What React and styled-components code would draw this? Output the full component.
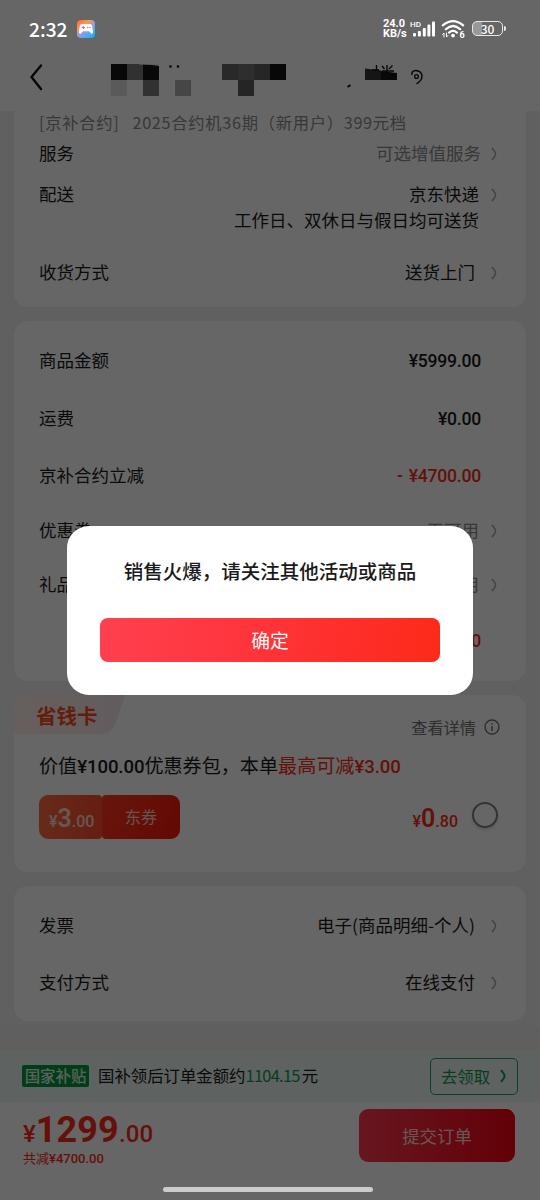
import React from 'react';
import styled, { createGlobalStyle } from 'styled-components';

const GlobalStyle = createGlobalStyle`
  * {
    box-sizing: border-box;
  }
  body {
    margin: 0;
    background: #f0f0f0;
    font-family: 'Noto Sans CJK SC', sans-serif;
    color: #1a1a1a;
  }
`;

const Page = styled.div`
  position: relative;
  display: flex;
  flex-direction: column;
  width: 540px;
  height: 1200px;
  overflow: hidden;
  background: linear-gradient(to bottom, #f0f0f0 1020px, #f2eaea 1046px);
`;

const StatusBar = styled.div`
  position: relative;
  z-index: 3;
  display: flex;
  align-items: center;
  height: 57px;
  padding: 0 34px 0 29px;
  color: #fff;
`;

const Clock = styled.span`
  width: 48px;
  font-size: 19.2px;
  font-weight: 500;
  line-height: 24px;
  white-space: nowrap;
`;

const StatusRight = styled.div`
  display: flex;
  align-items: center;
  margin-left: auto;

  > * {
    flex-shrink: 0;
  }
`;

const Speed = styled.div`
  width: 27px;
  font-family: Roboto, sans-serif;
  font-size: 11px;
  font-weight: 700;
  line-height: 10px;
  white-space: nowrap;
`;

const Battery = styled.div`
  display: flex;
  align-items: center;
  justify-content: center;
  width: 31px;
  height: 15px;
  margin-left: 7px;
  border: 1.5px solid #e8e8e8;
  border-radius: 5px;
  background: linear-gradient(to right, #999 32%, transparent 32%);
  font-size: 12px;
  font-weight: 500;
  line-height: 12px;
`;

const BatteryTip = styled.span`
  width: 2px;
  height: 5px;
  margin-left: 1px;
  border-radius: 0 2px 2px 0;
  background: #e8e8e8;
`;

const TopArea = styled.div`
  background: #fff;
  height: 111px;
  flex-shrink: 0;
`;

const NavBar = styled.div`
  display: flex;
  height: 54px;
`;

const Content = styled.main`
  display: flex;
  flex-direction: column;
  gap: 14px;
  height: 939px;
  padding: 0 14px;
`;

const Card = styled.section`
  height: ${(p) => p.$height}px;
  padding: ${(p) => p.$top || 0}px 28px 0 25px;
  border-radius: ${(p) => (p.$flat ? '0 0 14px 14px' : '14px')};
  background: #fff;
`;

const Sku = styled.div`
  height: 24px;
  color: #8c8c8c;
  font-size: 16.3px;
  line-height: 22px;
  letter-spacing: 0.7px;
  white-space: pre;
`;

const RowBox = styled.div`
  display: flex;
  align-items: ${(p) => (p.$tall ? 'flex-start' : 'center')};
  height: ${(p) => p.$height}px;
  padding-top: ${(p) => (p.$tall ? 9 : 0)}px;
  font-size: 17.5px;
  line-height: 26px;
  white-space: nowrap;
`;

const Label = styled.span`
  margin-top: ${(p) => (p.$tall ? -1 : -2)}px;
`;

const Value = styled.div`
  flex: 1;
  margin-top: ${(p) => (p.$tall ? -1 : -2)}px;
  margin-right: ${(p) => p.$gap || 12}px;
  color: ${(p) => p.$color || '#1a1a1a'};
  text-align: right;
`;

const Amount = styled.div`
  flex: 1;
  margin-right: 17px;
  color: ${(p) => (p.$red ? '#fa2c19' : '#1a1a1a')};
  font-family: Roboto, 'Noto Sans CJK SC', sans-serif;
  font-size: 17.6px;
  font-weight: 500;
  letter-spacing: -0.25px;
  word-spacing: 2px;
  text-align: right;
`;

const ArrowBox = styled.span`
  display: flex;
  align-items: center;
  height: 26px;
`;

const SavingCard = styled.section`
  height: 177px;
  border-radius: 14px;
  background: #fff;
`;

const SavingHead = styled.div`
  display: flex;
  justify-content: space-between;
  height: 52px;
  padding-right: 26px;
`;

const SavingTag = styled.div`
  width: 111px;
  height: 39px;
  padding-left: 22px;
  border-radius: 14px 0 0 0;
  background: linear-gradient(90deg, #ffeee8, #f4e6ea);
  clip-path: polygon(0 0, 100% 0, 91% 78%, 86% 95%, 81% 100%, 0 100%);
  color: #fa4a1c;
  font-size: 20.5px;
  font-weight: 700;
  line-height: 41px;
`;

const Detail = styled.div`
  display: flex;
  align-items: center;
  gap: 8px;
  height: 24px;
  margin-top: 20px;
  color: #737373;
  font-size: 16.2px;
  line-height: 24px;
`;

const SavingText = styled.div`
  padding: 5px 0 0 25px;
  font-size: 19.1px;
  line-height: 26px;
  white-space: nowrap;

  b {
    font-family: Roboto, sans-serif;
    font-weight: 500;
    font-size: 18.6px;
    letter-spacing: -0.1px;
  }
`;

const Red = styled.span`
  color: #fa2c19;
`;

const CouponRow = styled.div`
  display: flex;
  align-items: flex-start;
  height: 44px;
  margin-top: 15px;
  padding: 0 28px 0 25px;
`;

const CouponLeft = styled.div`
  width: 63px;
  height: 44px;
  padding-left: 10px;
  border-radius: 9px 4px 4px 9px;
  background: linear-gradient(90deg, #ff6a45, #ff4c2c);
  color: #ffd9cc;
`;

const CouponRight = styled.div`
  width: 78px;
  height: 44px;
  border-radius: 4px 9px 9px 4px;
  background: linear-gradient(115deg, #ff3a22, #fa1408);
  color: #ffd0c4;
  font-size: 16.2px;
  line-height: 43px;
  text-align: center;
`;

const Price = styled.div`
  display: flex;
  align-items: baseline;
  padding-top: ${(p) => p.$top || 0}px;
  font-family: Roboto, 'Noto Sans CJK SC', sans-serif;
  font-size: ${(p) => p.$small}px;
  font-weight: 500;
  line-height: 44px;
  white-space: nowrap;

  strong {
    font-size: ${(p) => p.$big}px;
    font-weight: ${(p) => p.$weight || 600};
  }
`;

const BuyPrice = styled.div`
  margin-left: auto;
  margin-right: 14px;
  color: #fa2c19;
`;

const Radio = styled.span`
  width: 26px;
  height: 26px;
  margin-top: 7px;
  border: 2px solid #808080;
  border-radius: 50%;
  box-shadow: 0 2px 3px #e0e0e0;
`;

const SubsidyBar = styled.div`
  display: flex;
  align-items: center;
  height: 52px;
  flex-shrink: 0;
  padding: 0 22px;
  background: #eaf5f0;
  font-size: 16.4px;
  white-space: nowrap;
`;

const SubsidyBadge = styled.span`
  width: 67px;
  height: 22px;
  margin-right: 9px;
  border-radius: 2px;
  background: #009a3c;
  color: #e5f5e9;
  font-size: 15.4px;
  font-weight: 500;
  line-height: 21px;
  text-align: center;
`;

const SubsidyText = styled.span`
  margin-top: -2px;
`;

const Green = styled.span`
  margin-right: 2px;
  color: #0f9a50;
  letter-spacing: -0.7px;
`;

const ClaimButton = styled.button`
  display: flex;
  align-items: center;
  justify-content: center;
  gap: 10px;
  width: 88px;
  height: 37px;
  margin: 1px 0 0 auto;
  padding: 0 0 2px;
  border: 1px solid #1ba158;
  border-radius: 5px;
  background: transparent;
  color: #0f9a50;
  font: inherit;
`;

const Footer = styled.footer`
  display: flex;
  justify-content: space-between;
  height: 98px;
  flex-shrink: 0;
  padding: 7px 25px 0 23px;
  background: #fff;
`;

const Total = styled.div`
  color: #fa2c19;
`;

const TotalPrice = styled(Price)`
  line-height: 40px;
  height: 41px;
  padding-top: 1px;
  letter-spacing: 0.1px;
`;

const Saved = styled.div`
  font-family: Roboto, 'Noto Sans CJK SC', sans-serif;
  font-size: 13px;
  font-weight: 400;
  line-height: 18px;

  b {
    font-weight: 500;
  }
`;

const SubmitButton = styled.button`
  width: 156px;
  height: 53px;
  border: 0;
  border-radius: 9px;
  background: linear-gradient(90deg, #ff3a50, #fa0012);
  color: #ffd9d9;
  font-family: inherit;
  font-size: 17.4px;
`;

const Mask = styled.div`
  position: absolute;
  inset: 0;
  z-index: 2;
  display: flex;
  flex-direction: column;
  align-items: center;
  justify-content: space-between;
  padding: 526px 0 8px;
  background: rgba(0, 0, 0, 0.6);
`;

const Dialog = styled.div`
  width: 406px;
  height: 169px;
  padding: 31px 33px 0;
  border-radius: 22px;
  background: #fff;
`;

const DialogTitle = styled.div`
  font-size: 19.5px;
  font-weight: 500;
  line-height: 28px;
  text-align: center;
  white-space: nowrap;
`;

const ConfirmButton = styled.button`
  display: block;
  width: 340px;
  height: 44px;
  margin-top: 33px;
  padding: 0;
  border: 0;
  border-radius: 8px;
  background: linear-gradient(100deg, #ff4050, #ff3338 50%, #fc2a18);
  color: #fff;
  font-family: inherit;
  font-size: 18.8px;
  line-height: 42px;
`;

const HomeIndicator = styled.div`
  width: 210px;
  height: 5px;
  margin-right: 4px;
  border-radius: 3px;
  background: #ccc;
`;

const Arrow = ({ color = '#a6a6a6', width = 1.5 }) => (
  <ArrowBox>
    <svg width="7" height="14" viewBox="0 0 7 14" fill="none" stroke={color} strokeWidth={width}>
      <path d="M1 1 C2.3 3.2 4.6 4.6 4.6 7 C4.6 9.4 2.3 10.8 1 13" />
    </svg>
  </ArrowBox>
);

const Row = ({ label, height, children, color, gap, tall }) => (
  <RowBox $height={height} $tall={tall}>
    <Label $tall={tall}>{label}</Label>
    <Value $color={color} $gap={gap} $tall={tall}>{children}</Value>
    <Arrow />
  </RowBox>
);

const AmountRow = ({ label, height, children, red }) => (
  <RowBox $height={height}>
    <Label>{label}</Label>
    <Amount $red={red}>{children}</Amount>
  </RowBox>
);

const GameIcon = () => (
  <svg width="18" height="18" viewBox="0 0 18 18">
    <defs>
      <linearGradient id="game" x1="0" y1="0" x2="0.8" y2="1">
        <stop offset="0" stopColor="#ff5a50" />
        <stop offset="0.35" stopColor="#ff9a48" />
        <stop offset="0.6" stopColor="#8a9cf0" />
        <stop offset="1" stopColor="#18b4f4" />
      </linearGradient>
    </defs>
    <rect width="18" height="18" rx="4" fill="url(#game)" />
    <path d="M5 4 H13 Q15 4 15.4 7 L16 12 Q16 14.5 14 13.5 L12 11.2 H6 L4 13.5 Q2 14.5 2 12 L2.6 7 Q3 4 5 4 Z" fill="#fff" />
    <path d="M4.8 7.5 H8 M6.4 6 V9" stroke="#d76a6c" strokeWidth="1" />
    <circle cx="10.7" cy="7.5" r="0.8" fill="#d78a9c" />
    <circle cx="13" cy="7.5" r="0.8" fill="#d78a9c" />
  </svg>
);

const SignalSvg = styled.svg`
  margin-right: 6px;
`;

const SignalIcon = () => (
  <SignalSvg width="25" height="20" viewBox="0 0 25 20" fill="#fff">
    <text x="0" y="7.6" fontSize="8" fontWeight="500" fontFamily="Roboto, sans-serif">HD</text>
    <rect x="3" y="14" width="3" height="3.5" rx="1" />
    <rect x="7.9" y="12" width="3" height="5.5" rx="1" />
    <rect x="12.8" y="9" width="3" height="8.5" rx="1" />
    <rect x="17.4" y="5.5" width="3" height="12" rx="1" />
    <rect x="22" y="2.5" width="3" height="15" rx="1" />
  </SignalSvg>
);

const WifiIcon = () => (
  <svg width="24" height="20" viewBox="0 0 24 20" fill="none" stroke="#fff" strokeLinecap="round">
    <path d="M1.8 6.3 Q12 -2.2 22.2 6.3" strokeWidth="2.2" />
    <path d="M4.8 10.2 Q12 3.8 19.2 10.2" strokeWidth="2.2" />
    <path d="M8 13.6 Q12 10.2 16 13.6" strokeWidth="2.1" />
    <circle cx="12" cy="16.6" r="1.9" fill="#fff" stroke="none" />
    <path d="M3 18 V14 L1.6 15.4 M5.5 14 V18 L6.8 16.6" strokeWidth="1" />
    <text x="18.6" y="18.8" fontSize="9" fontWeight="700" fontFamily="Roboto, sans-serif" fill="#fff" stroke="none">6</text>
  </svg>
);

const mosaic = [
  [111, 7, 16, '#141414'], [127, 7, 16, '#7c7c7c'], [143, 7, 16, '#141414'],
  [111, 23, 16, '#e1e1e1'], [143, 23, 16, '#7c7c7c'], [175, 23, 16, '#b0b0b0'],
  [222, 7, 16, '#666'], [238, 7, 16, '#747474'], [254, 7, 16, '#606060'],
  [270, 7, 16, '#141414'], [238, 23, 16, '#5c5c5c'],
];

const AddressHeader = () => (
  <svg width="540" height="54" viewBox="0 0 540 54" fill="none" stroke="#111">
    <path d="M41 8.5 L31.5 20 L41 32" strokeWidth="2.4" strokeLinecap="round" strokeLinejoin="round" />
    {mosaic.map(([x, y, size, fill]) => (
      <rect key={`${x}-${y}`} x={x} y={y} width={size} height={size} fill={fill} stroke="none" />
    ))}
    <path d="M139 7 H159 V9 L152 8 L139 7.5 Z" fill="#eee" stroke="none" />
    <circle cx="170.5" cy="9.5" r="1.3" fill="#111" stroke="none" />
    <circle cx="178" cy="9.5" r="1.3" fill="#111" stroke="none" />
    <path d="M365 11.5 L381 13.5 V23 H365 Z" fill="#353535" stroke="none" />
    <path d="M381 14 L397 16 V23 H381 Z" fill="#141414" stroke="none" />
    <path d="M376.5 8 V13 M382 9 L384.5 12 M387 8 V15 M392.5 8.5 L389 12 M372 13 H379 M382 14 H394" strokeWidth="1.4" />
    <path d="M347.5 30 L350.5 28" strokeWidth="2" />
    <path d="M412 18 C411 13.5 416 13 418 14 C423 15.5 423 21.5 419.5 24.5 L416.5 27" strokeWidth="1.4" />
    <circle cx="416.5" cy="19.5" r="1.9" strokeWidth="1.3" />
  </svg>
);

const InfoIcon = () => (
  <svg width="16" height="16" viewBox="0 0 16 16" fill="none" stroke="#777" strokeWidth="1.4">
    <circle cx="8" cy="8" r="7" />
    <path d="M8 7 V12 M8 4.2 V5.8" strokeWidth="1.6" />
  </svg>
);

const TopStatus = () => (
  <StatusBar>
    <Clock>2:32</Clock>
    <GameIcon />
    <StatusRight>
      <Speed>24.0<br />KB/s</Speed>
      <SignalIcon />
      <WifiIcon />
      <Battery>30</Battery>
      <BatteryTip />
    </StatusRight>
  </StatusBar>
);

const App = () => (
  <>
    <GlobalStyle />
    <Page>
      <TopArea>
        <TopStatus />
        <NavBar>
          <AddressHeader />
        </NavBar>
      </TopArea>

      <Content>
        <Card $height={196} $flat>
          <Sku>[京补合约]{'   '}2025合约机36期（新用户）399元档</Sku>
          <Row label="服务" height={38} color="#8c8c8c" gap={10}>可选增值服务</Row>
          <Row label="配送" height={80} tall>
            京东快递
            <br />
            工作日、双休日与假日均可送货
          </Row>
          <Row label="收货方式" height={40} gap={16}>送货上门</Row>
        </Card>

        <Card $height={360} $top={11}>
          <AmountRow label="商品金额" height={58}>¥5999.00</AmountRow>
          <AmountRow label="运费" height={57}>¥0.00</AmountRow>
          <AmountRow label="京补合约立减" height={58} red>- ¥4700.00</AmountRow>
          <Row label="优惠券" height={52} color="#8c8c8c">无可用</Row>
          <Row label="礼品卡" height={56} color="#8c8c8c">无可用</Row>
          <AmountRow label="" height={56} red>¥1299.00</AmountRow>
        </Card>

        <SavingCard>
          <SavingHead>
            <SavingTag>省钱卡</SavingTag>
            <Detail>
              查看详情
              <InfoIcon />
            </Detail>
          </SavingHead>
          <SavingText>
            价值<b>¥100.00</b>优惠券包，本单<Red>最高可减<b>¥3.00</b></Red>
          </SavingText>
          <CouponRow>
            <CouponLeft>
              <Price $small={16} $big={25} $top={2}>¥<strong>3</strong>.00</Price>
            </CouponLeft>
            <CouponRight>东券</CouponRight>
            <BuyPrice>
              <Price $small={16} $big={25} $top={2}>¥<strong>0</strong>.80</Price>
            </BuyPrice>
            <Radio />
          </CouponRow>
        </SavingCard>

        <Card $height={135} $top={11}>
          <Row label="发票" height={57} gap={16}>电子(商品明细-个人)</Row>
          <Row label="支付方式" height={57} gap={16}>在线支付</Row>
        </Card>
      </Content>

      <SubsidyBar>
        <SubsidyBadge>国家补贴</SubsidyBadge>
        <SubsidyText>国补领后订单金额约<Green>1104.15</Green>元</SubsidyText>
        <ClaimButton>
          去领取
          <Arrow color="#0f9a50" width={2} />
        </ClaimButton>
      </SubsidyBar>

      <Footer>
        <Total>
          <TotalPrice $small={24} $big={36} $weight={700}>¥<strong>1299</strong>.00</TotalPrice>
          <Saved>共减<b>¥4700.00</b></Saved>
        </Total>
        <SubmitButton>提交订单</SubmitButton>
      </Footer>

      <Mask>
        <Dialog>
          <DialogTitle>销售火爆，请关注其他活动或商品</DialogTitle>
          <ConfirmButton>确定</ConfirmButton>
        </Dialog>
        <HomeIndicator />
      </Mask>
    </Page>
  </>
);

export default App;
